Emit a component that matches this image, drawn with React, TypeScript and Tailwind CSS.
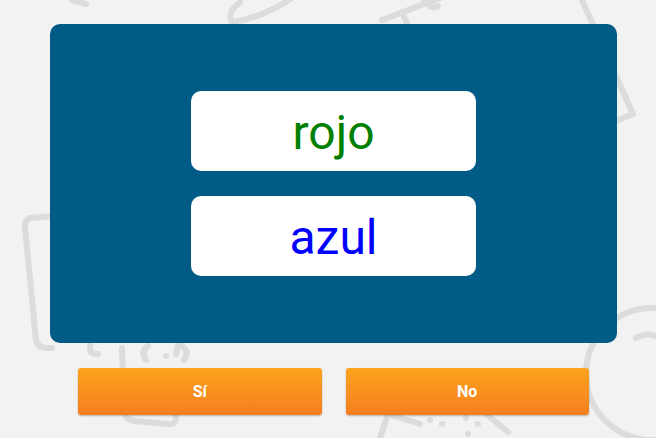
const Doodles = () => (
  <svg
    className="absolute inset-0 pointer-events-none"
    width="656"
    height="438"
    viewBox="0 0 656 438"
    fill="none"
    stroke="#dcdcdc"
    strokeWidth="6"
    strokeLinecap="round"
    strokeLinejoin="round"
  >
    {/* top left tick */}
    <path d="M72 0 L86 4" />
    {/* top phone curve */}
    <path d="M240 2 Q226 14 232 22 Q262 18 292 -2" />
    {/* top right letters */}
    <path d="M382 20 L440 -2" />
    <path d="M402 12 L410 30" />
    <path d="M424 0 Q430 10 438 6" />
    {/* triangle */}
    <path d="M582 0 L633 114 L608 124" />
    {/* left tablet */}
    <path d="M30 218 L52 216" />
    <path d="M30 218 Q24 220 25 228 L36 340 Q38 348 46 348 L52 348" />
    {/* bottom left controller */}
    <path d="M90 332 L90 348 Q90 354 96 354 L98 354" />
    <path d="M122 348 L124 410 Q125 420 135 421 L168 424 Q176 425 176 418 L174 404" />
    <path d="M178 345 L176 354" />
    <circle cx="166" cy="356" r="3" fill="#dcdcdc" stroke="none" />
    <path d="M148 346 Q140 352 146 360" />
    <path d="M182 346 Q190 352 184 360" />
    {/* bottom dice */}
    <path d="M380 438 L388 414 L420 424" />
    <path d="M436 392 L474 404 L508 432" />
    <circle cx="430" cy="420" r="3" fill="#dcdcdc" stroke="none" />
    <circle cx="442" cy="424" r="3" fill="#dcdcdc" stroke="none" />
    <circle cx="466" cy="418" r="3" fill="#dcdcdc" stroke="none" />
    <circle cx="478" cy="424" r="3" fill="#dcdcdc" stroke="none" />
    <circle cx="468" cy="434" r="3" fill="#dcdcdc" stroke="none" />
    {/* right magnifier */}
    <circle cx="652" cy="374" r="66" />
    <path d="M636 338 Q650 330 662 340" />
  </svg>
);

export default function App() {
  return (
    <div className="relative w-[656px] h-[438px] overflow-hidden bg-[#f2f2f2] font-['Roboto',sans-serif]">
      <Doodles />
      <div className="relative flex flex-col pt-[24px] pl-[50px] w-[617px]">
        {/* question panel */}
        <div className="h-[319px] rounded-[10px] bg-[#005b87] flex flex-col items-center justify-center gap-[25px]">
          <div className="w-[285px] h-[80px] rounded-[10px] bg-white flex items-center justify-center">
            <span className="mt-[4px] text-[48px] leading-none text-[#008000]">rojo</span>
          </div>
          <div className="w-[285px] h-[80px] rounded-[10px] bg-white flex items-center justify-center">
            <span className="mt-[4px] text-[48px] leading-none text-[#0000ff]">azul</span>
          </div>
        </div>

        {/* answers */}
        <div className="mt-[25px] px-[28px] grid grid-cols-2 gap-[24px]">
          <button className="h-[47px] rounded-[3px] bg-gradient-to-b from-[#fba31d] to-[#f57e20] text-white font-bold text-[16px] shadow-[0_1px_2px_rgba(0,0,0,0.25)]">
            Sí
          </button>
          <button className="h-[47px] rounded-[3px] bg-gradient-to-b from-[#fba31d] to-[#f57e20] text-white font-bold text-[16px] shadow-[0_1px_2px_rgba(0,0,0,0.25)]">
            No
          </button>
        </div>
      </div>
    </div>
  );
}
